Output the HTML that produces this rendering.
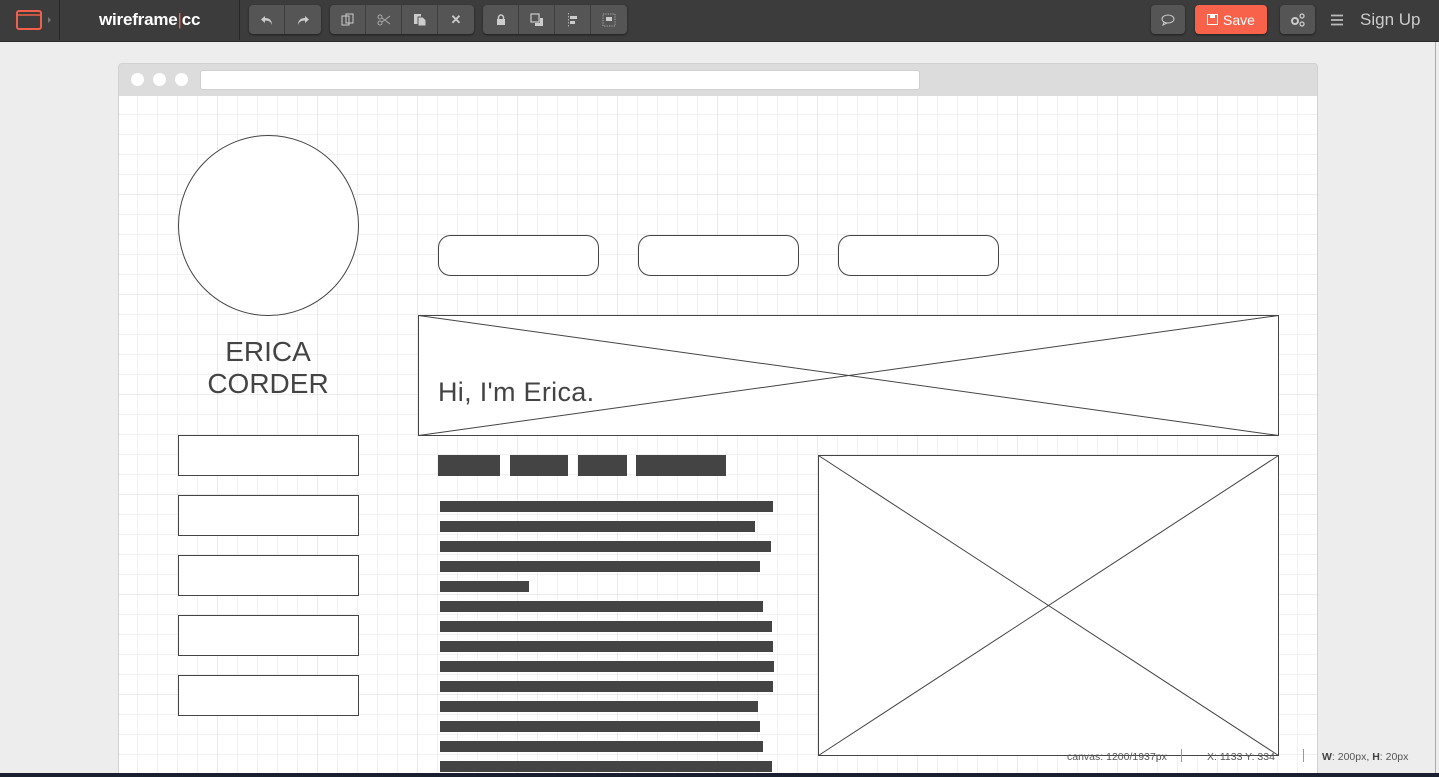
<!DOCTYPE html>
<html><head><meta charset="utf-8"><style>
*{margin:0;padding:0;box-sizing:border-box}
body{width:1439px;height:777px;overflow:hidden;background:#ededed;font-family:"Liberation Sans",sans-serif;position:relative}
#tb{position:absolute;left:0;top:0;width:1439px;height:42px;background:#3c3c3c;border-bottom:1px solid #2a2a2a}
.sep{position:absolute;top:0;height:40px;width:1px;background:#262626}
.grp{position:absolute;top:5px;height:29px;display:flex;border-radius:4px;background:#555;box-shadow:0 1px 2px rgba(0,0,0,.5)}
.grp div{width:36px;height:29px;border-right:1px solid #3e3e3e;display:flex;align-items:center;justify-content:center;color:#ccc;font-size:12px}
.grp div:last-child{border-right:none}
.btn{position:absolute;top:5px;height:29px;border-radius:4px;background:#555;box-shadow:0 1px 2px rgba(0,0,0,.5);display:flex;align-items:center;justify-content:center;color:#ccc}
</style></head><body>
<div id="tb">
  <svg style="position:absolute;left:16px;top:10px" width="40" height="20">
    <rect x="1" y="1" width="24" height="18" rx="2" fill="none" stroke="#f0604a" stroke-width="2"/>
    <line x1="1" y1="5" x2="25" y2="5" stroke="#f0604a" stroke-width="1.5"/>
    <path d="M32 7 L35 10 L32 13Z" fill="#777"/>
  </svg>
  <div class="sep" style="left:59px"></div>
  <div style="position:absolute;left:99px;top:10px;color:#fff;font-size:17px;font-weight:bold;letter-spacing:-0.2px">wireframe<span style="color:#f0604a;font-weight:normal">|</span>cc</div>
  <div class="sep" style="left:239px"></div>
  <div class="grp" style="left:249px">
    <div><svg width="14" height="12"><path d="M5 2 L1 5.5 L5 9 V6.5 C9 6.5 11 8 12 11 C12 6 9 4 5 4Z" fill="#ccc"/></svg></div>
    <div><svg width="14" height="12"><path d="M9 2 L13 5.5 L9 9 V6.5 C5 6.5 3 8 2 11 C2 6 5 4 9 4Z" fill="#ccc"/></svg></div>
  </div>
  <div class="grp" style="left:330px">
    <div><svg width="14" height="14"><rect x="1" y="3" width="7" height="9" fill="none" stroke="#ccc"/><rect x="5" y="1" width="7" height="9" fill="none" stroke="#ccc"/></svg></div>
    <div><svg width="14" height="12"><circle cx="3" cy="3" r="2" fill="none" stroke="#aaa"/><circle cx="3" cy="9" r="2" fill="none" stroke="#aaa"/><path d="M5 4 L13 10 M5 8 L13 2" stroke="#aaa"/></svg></div>
    <div><svg width="14" height="14"><rect x="1" y="1" width="7" height="10" fill="#ccc"/><path d="M5 4 H10 L13 7 V13 H5Z" fill="#ccc" stroke="#555"/></svg></div>
    <div style="font-weight:bold;font-size:13px">✕</div>
  </div>
  <div class="grp" style="left:483px">
    <div><svg width="10" height="12"><path d="M2.5 5 V3.5 A2.5 2.5 0 0 1 7.5 3.5 V5" fill="none" stroke="#ccc" stroke-width="1.5"/><rect x="1" y="5" width="8" height="6" fill="#ccc"/></svg></div>
    <div><svg width="14" height="14"><rect x="1" y="1" width="8" height="8" fill="none" stroke="#ccc" stroke-width="1.2"/><path d="M10 5 H13 V13 H5 V10 H10Z" fill="#ccc"/></svg></div>
    <div><svg width="12" height="14"><line x1="1.5" y1="0" x2="1.5" y2="14" stroke="#aaa" stroke-dasharray="1.5 1.5"/><rect x="3" y="3" width="7" height="3" fill="#ccc"/><rect x="3" y="8" width="5" height="3" fill="#ccc"/></svg></div>
    <div><svg width="14" height="14"><rect x="1" y="1" width="12" height="12" fill="none" stroke="#aaa" stroke-dasharray="1.2 1.2"/><rect x="4" y="4" width="6" height="4" fill="#ccc"/></svg></div>
  </div>
  <div class="btn" style="left:1151px;width:34px"><svg width="14" height="12"><ellipse cx="7" cy="5" rx="6" ry="4" fill="none" stroke="#ccc"/><path d="M3 8 L2 11 L6 9" fill="none" stroke="#ccc"/></svg></div>
  <div class="btn" style="left:1195px;width:72px;background:#f8624a;color:#fff;font-size:14px;gap:5px"><svg width="11" height="11"><rect x=".5" y=".5" width="10" height="10" fill="none" stroke="#fff"/><rect x="3" y="1" width="5" height="3" fill="#fff"/></svg>Save</div>
  <div class="btn" style="left:1280px;width:35px"><svg width="16" height="14"><circle cx="5" cy="8" r="3" fill="none" stroke="#ccc" stroke-width="2"/><circle cx="12" cy="3" r="2" fill="none" stroke="#ccc" stroke-width="1.3"/><circle cx="12" cy="11" r="2" fill="none" stroke="#ccc" stroke-width="1.3"/></svg></div>
  <svg style="position:absolute;left:1330px;top:14px" width="14" height="12"><path d="M1 1.5H13M1 6H13M1 10.5H13" stroke="#bbb" stroke-width="1.8"/></svg>
  <div style="position:absolute;left:1360px;top:10px;color:#ccc;font-size:17px">Sign Up</div>
</div>
<div style="position:absolute;left:1435px;top:42px;width:1px;height:735px;background:#aaa"></div>

<div style="position:absolute;left:118px;top:63px;width:1200px;height:714px;border:1px solid #d2d2d2;border-radius:4px 4px 0 0;background:#dcdcdc;overflow:hidden">
  <div style="position:absolute;left:12px;top:9px;width:13px;height:13px;border-radius:50%;background:#fff"></div>
  <div style="position:absolute;left:34px;top:9px;width:13px;height:13px;border-radius:50%;background:#fff"></div>
  <div style="position:absolute;left:56px;top:9px;width:13px;height:13px;border-radius:50%;background:#fff"></div>
  <div style="position:absolute;left:81px;top:6px;width:720px;height:20px;border-radius:3px;background:#fff;border:1px solid #cfcfcf"></div>
</div>

<svg style="position:absolute;left:119px;top:96px" width="1198" height="681" viewBox="119 96 1198 681" font-family="Liberation Sans, sans-serif">
  <defs>
    <pattern id="g" x="118" y="95" width="20" height="20" patternUnits="userSpaceOnUse">
      <path d="M20 0 V20 M0 20 H20" stroke="#e4e4e4" stroke-width="1" fill="none"/>
    </pattern>
    <pattern id="G" x="118" y="95" width="100" height="100" patternUnits="userSpaceOnUse">
      <path d="M100 0 V100 M0 100 H100" stroke="#d8d8d8" stroke-width="1" fill="none"/>
    </pattern>
  </defs>
  <rect x="119" y="96" width="1198" height="681" fill="#fff"/>
  <rect x="119" y="96" width="1198" height="681" fill="url(#g)"/>
  <rect x="119" y="96" width="1198" height="681" fill="url(#G)"/>
  <g fill="#fff" stroke="#444" stroke-width="1">
    <circle cx="268.5" cy="225.5" r="90"/>
    <rect x="438.5" y="235.5" width="160" height="40" rx="12"/>
    <rect x="638.5" y="235.5" width="160" height="40" rx="12"/>
    <rect x="838.5" y="235.5" width="160" height="40" rx="12"/>
    <rect x="418.5" y="315.5" width="860" height="120"/>
    <path d="M418.5 315.5 L1278.5 435.5 M418.5 435.5 L1278.5 315.5" fill="none"/>
    <rect x="178.5" y="435.5" width="180" height="40"/>
    <rect x="178.5" y="495.5" width="180" height="40"/>
    <rect x="178.5" y="555.5" width="180" height="40"/>
    <rect x="178.5" y="615.5" width="180" height="40"/>
    <rect x="178.5" y="675.5" width="180" height="40"/>
    <rect x="818.5" y="455.5" width="460" height="300"/>
    <path d="M818.5 455.5 L1278.5 755.5 M818.5 755.5 L1278.5 455.5" fill="none"/>
  </g>
  <g fill="#444" font-size="28" text-anchor="middle">
    <text x="268" y="361">ERICA</text>
    <text x="268" y="393">CORDER</text>
  </g>
  <text x="438" y="401" fill="#444" font-size="27" letter-spacing="0.3">Hi, I'm Erica.</text>
  <g fill="#444">
    <rect x="438" y="455" width="62" height="21"/>
    <rect x="510" y="455" width="58" height="21"/>
    <rect x="578" y="455" width="49" height="21"/>
    <rect x="636" y="455" width="90" height="21"/>
    <rect x="440" y="501" width="333" height="11"/>
    <rect x="440" y="521" width="315" height="11"/>
    <rect x="440" y="541" width="331" height="11"/>
    <rect x="440" y="561" width="320" height="11"/>
    <rect x="440" y="581" width="89" height="11"/>
    <rect x="440" y="601" width="323" height="11"/>
    <rect x="440" y="621" width="332" height="11"/>
    <rect x="440" y="641" width="333" height="11"/>
    <rect x="440" y="661" width="334" height="11"/>
    <rect x="440" y="681" width="333" height="11"/>
    <rect x="440" y="701" width="318" height="11"/>
    <rect x="440" y="721" width="320" height="11"/>
    <rect x="440" y="741" width="323" height="11"/>
    <rect x="440" y="761" width="332" height="11"/>
  </g>
  <g font-size="10.5" fill="#555">
    <text x="1067" y="760">canvas: 1200/1937px</text>
    <text x="1207" y="760">X: 1133 Y: 334</text>
  </g>
  <path d="M1181.5 749 V762 M1303.5 749 V762" stroke="#999"/>
</svg>
<div style="position:absolute;left:1318px;top:743px;width:117px;height:30px;background:#ededed;font-size:10.5px;color:#555;padding:8px 0 0 4px"><b style="color:#444">W</b>: 200px, <b style="color:#444">H</b>: 20px</div>
<div style="position:absolute;left:0;top:773px;width:1439px;height:4px;background:#1a2030"></div>
</body></html>
